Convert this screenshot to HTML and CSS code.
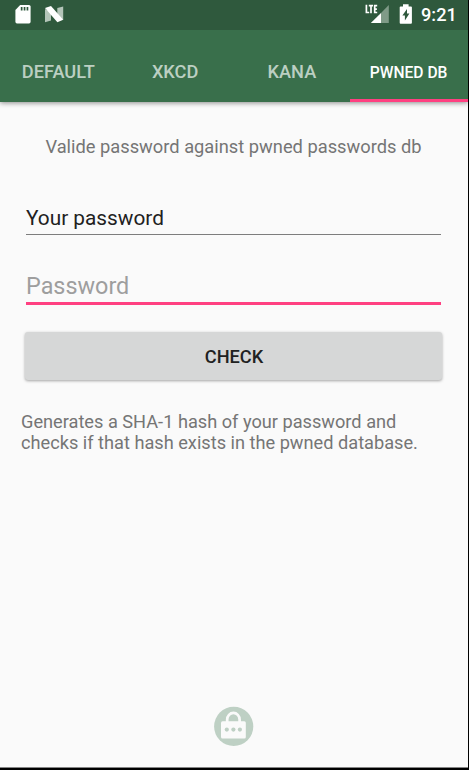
FILE: index.html
```html
<!DOCTYPE html>
<html lang="en">
<head>
<meta charset="utf-8">
<title>Pwned DB</title>
<link rel="stylesheet" href="styles.css">
</head>
<body>
<div class="screen">
  <header class="top">
    <div class="status">
      <svg class="status-icon" width="70" height="29" viewBox="0 0 70 29">
        <path fill="#fff" d="M20.2 5h8.800q1.600 0 1.600 1.600v15.200q0 1.600-1.600 1.600H17q-1.600 0-1.600-1.600V10z"/>
        <path fill="#2f593d" d="M20.800 7h1.700v3.600h-1.700zM23.700 7h1.700v3.600h-1.700zM26.600 7h1.700v3.600h-1.700z"/>
        <path fill="#b4c5b9" d="M45 9l6 3v8.500L45 22.200zM57.300 8l5.900-1.500V20l-5.900-3z"/>
        <path fill="#fff" d="M45 8l6-2 12.200 13.800-5.800 2.400z"/>
      </svg>
      <div class="status-right">
        <svg width="50" height="29" viewBox="363 0 50 29">
          <path fill="#7f9a87" d="M388.800 5v18H381v-10z"/>
          <path fill="#fff" d="M381 13V23H370.800z"/>
          <path fill="none" stroke="#fff" stroke-width="1.700" d="M366.400 4.800v7.700h2.800M368.800 5.700h4.200M371 5.700V13.300M377.200 5.700h-2.500v6.800h2.500M374.700 9.100h2.200"/>
          <path fill="#fff" fill-rule="evenodd" d="M403 4.300h5.600v2.100h2.400q.9 0 .9.900v15.500q0 .9-.9.900h-10.400q-.9 0-.9-.9V7.300q0-.9.9-.9h2.400zM407 9l-4.600 6.500h2.500v5l4.500-7h-2.400z"/>
        </svg>
        <span class="clock">9:21</span>
      </div>
    </div>
    <nav class="tabs">
      <div class="tab"><span>DEFAULT</span></div>
      <div class="tab"><span>XKCD</span></div>
      <div class="tab"><span>KANA</span></div>
      <div class="tab active"><span>PWNED DB</span></div>
    </nav>
  </header>
  <main class="content">
    <p class="intro"><span>Valide password against pwned passwords db</span></p>
    <div class="field"><span>Your password</span></div>
    <div class="field focused"><span>Password</span></div>
    <button class="check"><span>CHECK</span></button>
    <p class="note"><span>Generates a SHA-1 hash of your password and<br>checks if that hash exists in the pwned database.</span></p>
  </main>
  <footer class="brand">
    <svg width="40" height="40" viewBox="0.3 -0.4 40 40">
      <circle cx="20" cy="20" r="19.6" fill="#bed0c4"/>
      <path fill="none" stroke="#fafafa" stroke-width="2.7" d="M13.5 17v-3.800a6.200 6.700 0 0 1 12.400 0V17"/>
      <rect x="7.3" y="14.800" width="24.800" height="17.300" rx="1.5" fill="#fafafa"/>
      <g fill="#bed0c4"><circle cx="13.1" cy="23.2" r="2.1"/><circle cx="19.7" cy="23.2" r="2.1"/><circle cx="26.2" cy="23.2" r="2.1"/></g>
    </svg>
  </footer>
</div>
</body>
</html>
```
FILE: styles.css
```css
* { box-sizing: border-box; }
body {
  margin: 0;
  background: #000;
  font-family: Roboto, sans-serif;
}
.screen {
  display: flex;
  flex-direction: column;
  width: 468px;
  height: 768px;
  background: #fafafa;
  border-bottom: 1px solid #858585;
}
.top {
  height: 102px;
  background: #396f4b;
  box-shadow: 0 1px 5px rgba(0, 0, 0, .45);
  clip-path: inset(0 0 -10px 0);
}
.status {
  display: flex;
  justify-content: space-between;
  height: 30px;
  background: #2f593d;
}
.status-right { display: flex; padding-right: 12px; }
.clock {
  width: 43px;
  padding-left: 8px;
  color: #fff;
  font-size: 18.2px;
  font-weight: 500;
  line-height: 30px;
  white-space: nowrap;
}
.tabs { display: flex; width: 467px; height: 72px; }
.tab {
  display: flex;
  flex: 1;
  align-items: center;
  justify-content: center;
  padding-top: 12px;
  color: #bccfc2;
  font-size: 18.2px;
  font-weight: 500;
  line-height: 20px;
  white-space: nowrap;
}
.tab.active {
  margin-right: -1px;
  padding-top: 16px;
  padding-right: 1px;
  border-bottom: 3px solid #ff4081;
  color: #fff;
  font-size: 15.6px;
}
.content { flex: 1; padding: 34px 27px 0 26px; }
.intro {
  margin: 0;
  height: 60px;
  color: #757575;
  font-size: 18.3px;
  line-height: 22px;
  text-align: center;
  white-space: nowrap;
}
.field {
  height: 39px;
  border-bottom: 1px solid #7d7d7d;
  color: #212121;
  font-size: 20.8px;
  line-height: 45px;
}
.field.focused {
  height: 40px;
  margin-top: 30px;
  border-bottom: 3px solid #ff4081;
  color: #9e9e9e;
  font-size: 23.4px;
  line-height: 43px;
}
.check {
  display: block;
  width: 417px;
  height: 48px;
  margin: 27px 0 0 -1px;
  padding: 2px 0 0 1px;
  border: 0;
  border-radius: 3px;
  background: #d6d7d7;
  box-shadow: 0 1px 3px rgba(0, 0, 0, .35);
  color: #212121;
  font: 500 18.2px/46px Roboto, sans-serif;
}
.note {
  margin: 31px -5px 0;
  color: #757575;
  font-size: 18.2px;
  line-height: 21px;
  white-space: nowrap;
}
.brand { display: flex; justify-content: center; height: 61px; }
```
